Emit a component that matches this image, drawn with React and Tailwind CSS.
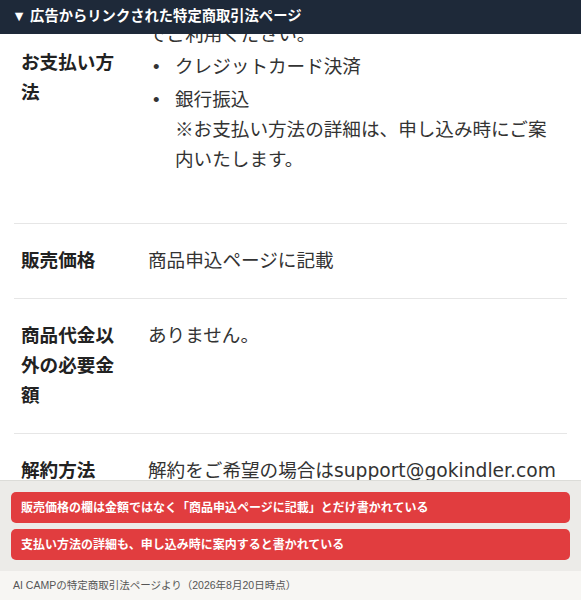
import React from 'react';

const rows = [
    {
        label: '販売価格',
        value: <p>商品申込ページに記載</p>,
    },
    {
        label: '商品代金以外の必要金額',
        value: <p>ありません。</p>,
    },
    {
        label: '解約方法',
        value: (
            <p className="whitespace-nowrap">
                解約をご希望の場合は<span className="font-['DejaVu_Sans',sans-serif] text-[18.7px]">support@gokindler.com</span>
            </p>
        ),
    },
];

const notes = [
    '販売価格の欄は金額ではなく「商品申込ページに記載」とだけ書かれている',
    '支払い方法の詳細も、申し込み時に案内すると書かれている',
];

export default function App() {
    return (
        <div
            className="relative h-[600px] w-[581px] overflow-hidden bg-white"
            style={{ fontFamily: '"Liberation Sans", "Noto Sans CJK JP", sans-serif' }}
        >
            <div className="px-[14px] pt-[20px] text-[18.6px] leading-[30px] text-[#333]">
                {/* payment row, scrolled so only the tail of the previous line shows */}
                <div className="grid grid-cols-[134px_1fr] border-b border-[#e6e6e6] pb-[48px]">
                    <div className="pl-[7px] pt-[28px] font-bold text-[#222]">
                        <p className="w-[100px]">お支払い方法</p>
                    </div>
                    <div>
                        <p>でご利用ください。</p>
                        <ul className="mt-[2px] pl-[27px]">
                            <li className="relative">
                                <span className="absolute -left-[22px] top-0">•</span>
                                クレジットカード決済
                            </li>
                            <li className="relative mt-[3px]">
                                <span className="absolute -left-[22px] top-0">•</span>
                                銀行振込
                                <br />
                                ※お支払い方法の詳細は、申し込み時にご案
                                <br />
                                内いたします。
                            </li>
                        </ul>
                    </div>
                </div>

                {rows.map((row) => (
                    <div
                        key={row.label}
                        className="grid grid-cols-[134px_1fr] border-b border-[#e6e6e6] py-[22px]"
                    >
                        <div className="pl-[7px] font-bold text-[#222]">
                            <p className="w-[100px]">{row.label}</p>
                        </div>
                        <div>{row.value}</div>
                    </div>
                ))}
            </div>

            <div className="absolute inset-x-0 top-0 flex h-[34px] items-center bg-[#1e2939] px-[12px] text-[14.3px] font-bold text-white">
                ▼ 広告からリンクされた特定商取引法ページ
            </div>

            <div className="absolute inset-x-0 bottom-0 border-t border-[#dcdcd8]">
                <div className="flex flex-col gap-[6px] bg-[#ecebe8] px-[11px] py-[11px]">
                    {notes.map((note) => (
                        <div
                            key={note}
                            className="flex h-[31px] items-center rounded-[5px] bg-[#e13d3f] px-[10px] text-[12px] font-bold text-white"
                        >
                            {note}
                        </div>
                    ))}
                </div>
                <div className="flex h-[29px] items-center bg-[#f7f6f3] px-[13px] text-[10.5px] text-[#555]">
                    AI CAMPの特定商取引法ページより（2026年8月20日時点）
                </div>
            </div>
        </div>
    );
}
